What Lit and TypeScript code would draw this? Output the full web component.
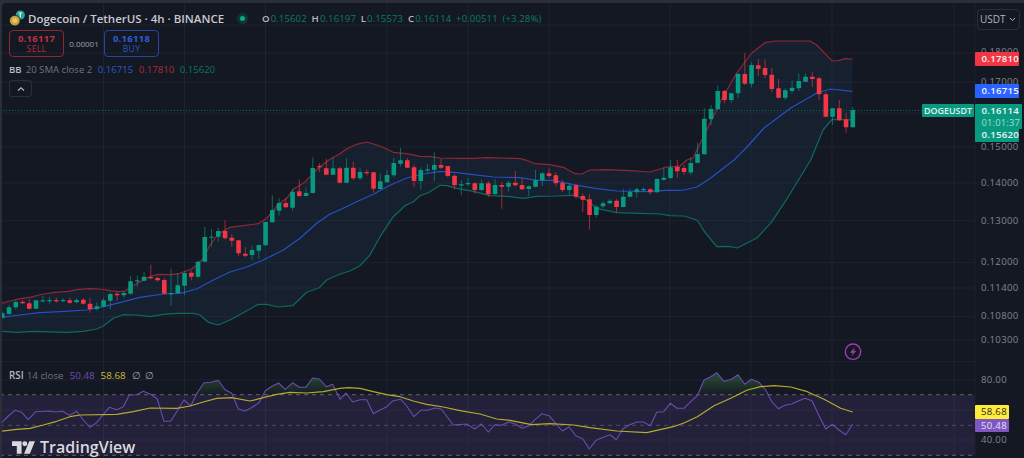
import { LitElement, html, css, svg } from "lit";
import { customElement } from "lit/decorators.js";

type P = number[];
const z4 = (a: P[]) => a.map(([x, y]) => [x / 3, 110 + y / 3]);
const z5 = (a: P[]) => a.map(([x, y]) => [340 + x / 3, 110 + y / 3]);
const z7 = (a: P[]) => a.map(([x, y]) => [x / 3, 350 + y / 3]);
const z8 = (a: P[]) => a.map(([x, y]) => [340 + x / 3, 350 + y / 3]);
const z9 = (a: P[]) => a.map(([x, y]) => [684 + x / 3, 340 + y / 3]);
const pts = (a: P[]) => a.map(([x, y]) => `${x.toFixed(1)},${y.toFixed(1)}`).join(" ");

const upper = [
  ...z4([[0,581],[30,573],[60,566],[90,562],[130,552],[165,547],[205,544],[235,538],[270,536],[300,537],[330,542],[355,545],[375,543],[400,527],[430,510],[455,498],[475,493],[510,494],[535,491],[575,477],[590,465],[610,445],[630,405],[655,372],[690,352],[730,347],[775,341],[800,325],[835,283],[860,265],[880,238],[915,216],[940,190],[960,170],[990,148],[1020,131]]),
  ...z5([[20,116],[50,103],[80,96],[120,108],[160,127],[200,131],[240,139],[270,140],[300,144],[350,145],[400,145],[440,143],[490,144],[540,146],[560,151],[585,161],[630,164],[670,172],[705,191],[725,192],[750,180],[800,179],[870,182],[930,186],[980,171],[1020,168]]),
  [686.7,160],[693,158],[706.7,130],[723,96.7],[736.7,73],[751.7,53],[765,42.7],[775,41],[810,41],[816.7,45],[831.7,60.7],[836.7,61],[845,58.7],[852.7,59],
];
const mid = [
  ...z4([[0,622],[60,615],[120,608],[180,605],[260,600],[310,590],[350,580],[420,562],[490,552],[540,550],[590,537],[640,510],[690,486],[740,471],[790,450],[850,420],[900,385],[950,340],[990,312],[1020,299]]),
  ...z5([[50,275],[100,253],[150,226],[200,204],[250,192],[300,184],[350,188],[400,194],[460,201],[540,203],[590,211],[640,211],[700,224],[770,236],[830,243],[920,245],[980,241],[1020,241]]),
  [684,190],[697,187],[710.7,178],[734,160],[747,147],[764,128],[790.7,108],[817,93],[830.7,89],[852.3,91.3],
];
const lower = [
  ...z4([[0,664],[50,667],[100,664],[200,667],[250,664],[290,657],[310,648],[340,625],[370,614],[410,615],[450,620],[490,613],[530,610],[580,610],[600,615],[625,637],[655,645],[690,630],[730,608],[775,583],[800,583],[835,591],[878,587],[920,547],[958,533],[980,510],[1020,492]]),
  ...z5([[30,483],[60,467],[90,435],[120,380],[160,320],[195,287],[220,275],[240,257],[265,248],[300,226],[320,227],[350,235],[400,244],[450,257],[500,259],[550,265],[590,259],[650,258],[700,256],[735,267],[770,295],[830,308],[900,310],[960,312],[990,317],[1020,318]]),
  [684,216],[697.3,220.3],[704,231],[716.7,246.7],[729,246.3],[737.3,248],[757.3,237.7],[771.3,222.3],[787.3,198.3],[810.7,160],[823,130],[832,119.5],[852,120],
];

// [green?, wick top, body top, body bottom, wick bottom], zoomed coordinates of the first two crops
const c1: P[] = [
[1,605,610,623,625],[1,585,592,612,614],[1,570,576,592,598],[0,570,575,580,582],[0,567,580,596,598],[1,570,571,596,597],[1,558,571,574,576],[1,561,570,573,581],[0,562,570,574,578],[1,564,570,574,576],
[0,562,571,578,582],[1,564,570,577,579],[0,563,569,581,584],[0,563,581,597,608],[1,577,589,597,602],[1,564,571,590,592],[1,548,552,572,598],[0,545,551,556,572],[1,541,549,556,563],[1,498,514,551,554],
[1,497,511,513,530],[1,486,500,512,514],[0,464,501,505,508],[0,500,504,511,515],[0,504,510,551,554],[1,476,549,551,587],[1,490,526,549,552],[1,483,489,527,556],[0,482,488,500,511],[1,452,455,500,505],
[1,351,381,455,456],[1,357,380,382,410],[1,354,363,380,395],[0,331,363,385,388],[0,372,383,392,410],[0,391,391,430,438],[0,411,431,437,441],[1,407,420,435,450],[1,404,405,422,447],[1,336,336,406,407],
[1,256,300,337,338],[1,265,279,302,317],[0,265,279,292,293],[1,237,245,293,302],[0,209,244,258,261],[1,232,249,258,260],[1,142,174,249,250],[0,160,168,170,186],[0,146,175,194,195],[1,142,175,194,195],
[0,170,175,218,220],[1,145,173,218,219],[0,155,173,205,210],[1,172,186,205,210],[0,178,186,188,196],[0,187,187,236,248],[1,190,214,237,238],[1,180,195,217,218],[1,143,159,196,202],[1,113,151,161,170],
[0,144,151,173,175],[0,163,172,213,232],[1,172,180,213,238],[1,162,178,180,188],[1,127,165,179,213],[0,147,165,173,177],[0,168,168,198,202],[0,192,197,226,238],[1,210,223,226,256],[1,203,219,223,228],
[0,218,220,240,252],[1,208,220,240,243],[0,213,220,253,262],[1,207,225,252,255],[0,217,225,230,296],[1,212,218,230,245],[0,183,218,226,230],[0,205,225,238,240],[1,226,229,237,258],[1,180,210,230,232],
[1,186,190,211,228],[0,175,190,198,204],[0,187,196,220,230],[0,210,219,240,246],[1,220,227,240,255],[0,222,226,260,266],[0,250,258,269,307],[0,252,268,315,359],[1,285,290,315,323],[1,272,280,289,294],
[1,267,272,280,282],[0,267,272,291,308],[1,237,260,291,292],[1,236,246,260,262],[1,232,238,247,262],[1,232,237,239,244],[0,234,238,247,254],[1,205,207,247,248],[1,172,203,209,212],[1,150,172,204,208],
[0,150,170,184,204],
];
// real pixel coordinates for the rest
const c2: P[] = [
[0,165,168,172,175],[1,157,163,172.5,175],[1,142.7,154,162.7,163],[1,108,118.7,154.3,154.5],[1,105,109,119.3,125],[1,85,91,109.3,109.5],[0,90,91,100,103.3],[1,93,93.3,100,103],[1,73,74,93.3,98],[0,53,74,83.7,85],
[1,62,65,83.7,87.3],[0,59,65.3,68.7,75.7],[0,59.3,68,75,78],[0,68,74.7,89,92.3],[0,79,88.3,97.7,98.3],[1,88.3,90.3,97.7,100],[1,80.7,87.7,91,93.3],[1,73.3,81,88.3,91],[1,73.3,76.7,81.7,82.3],[0,72.3,76.7,79,86.7],
[0,76.7,78.3,94.3,100],[0,91.7,94.3,116.7,117.3],[1,108,108.3,116.7,125],[0,100,108.3,120.3,121],[0,112.7,119.3,127.3,132.7],[1,106.7,110,127.3,127.7],
];
const candles = [...c1.map(([g, ...r]) => [g, ...r.map((v) => 110 + v / 3)]), ...c2];

const rsi = [
  ...z7([[5,218],[25,198],[45,181],[65,187],[85,209],[107,185],[148,183],[165,186],[188,184],[208,196],[230,184],[250,210],[270,232],[290,218],[310,193],[328,172],[350,179],[370,170],[388,135],[410,134],[430,124],[452,133],[472,147],[492,214],[512,214],[530,185],[552,150],[572,168],[592,128],[612,98],[633,97],[655,91],[675,119],[695,130],[715,177],[735,183],[757,172],[777,158],[796,122],[817,108],[836,99],[856,118],[878,98],[898,112],[917,112],[938,84],[958,87],[979,110],[998,103]]),
  ...z8([[0,148],[18,129],[38,156],[60,149],[80,149],[100,191],[120,180],[140,170],[160,152],[182,148],[200,168],[222,200],[242,181],[263,181],[284,174],[304,177],[340,225],[380,222],[404,237],[424,222],[445,246],[465,224],[485,226],[506,216],[526,222],[546,235],[567,227],[586,208],[606,191],[627,197],[647,220],[667,243],[687,231],[708,258],[728,266],[748,297],[768,271],[790,262],[810,254],[829,269],[849,236],[869,224],[890,216],[910,216],[931,227],[950,187],[971,185],[991,160],[1011,175]]),
  ...z9([[0,205],[20,185],[40,167],[60,120],[80,110],[98,98],[120,124],[142,118],[162,104],[182,133],[202,118],[225,127],[245,150],[263,185],[283,206],[303,196],[323,192],[343,183],[363,175],[384,182],[404,225],[425,267],[445,253],[465,270],[485,284],[506,253]]),
];
const rsiMa = [
  ...z7([[0,244],[50,238],[90,235],[130,225],[170,214],[210,200],[240,195],[350,193],[400,185],[450,174],[530,175],[570,168],[610,156],[650,145],[695,143],[750,153],[790,143],[830,133],[870,127],[920,129],[970,125],[1020,115]]),
  ...z8([[25,113],[60,115],[100,125],[140,134],[180,140],[220,153],[260,163],[310,171],[360,182],[420,192],[470,207],[510,211],[575,224],[630,221],[700,225],[750,233],[830,243],[920,248],[1000,230]]),
  ...z9([[0,249],[40,230],[90,197],[140,175],[190,150],[230,140],[270,137],[320,141],[370,155],[420,178],[470,205],[506,216]]),
];

const vGrid = [103.5, 184.5, 265.5, 387, 468, 549, 670, 751, 832, 954];
const hGrid = [25, 53, 82, 113, 147, 183, 220.7, 262.7, 288, 316.7, 340, 361.7, 380, 410, 440];
const axisLabels: [string, number][] = [
  ["0.18000", 52], ["0.17000", 82], ["0.15000", 147], ["0.14000", 183], ["0.13000", 221], ["0.12000", 262],
  ["0.11400", 288], ["0.10800", 316], ["0.10300", 340], ["80.00", 380], ["40.00", 440],
];

@customElement("app-root")
export class AppRoot extends LitElement {
  static styles = css`
    :host { display: block; width: 1024px; height: 458px; background: #2a2e39; overflow: hidden; font-family: "Open Sans", "Liberation Sans", sans-serif; }
    .frame { position: relative; margin: 3px 0 0 2px; width: 1022px; height: 455px; background: #141823; border-top-left-radius: 4px; overflow: hidden; display: grid; grid-template-columns: 972px 50px; }
    .canvas { position: absolute; inset: 0; width: 1022px; height: 455px; }
    .overlay { position: relative; display: flex; flex-direction: column; align-items: flex-start; padding: 6px 0 0 7px; }
    .title { display: flex; align-items: center; height: 18px; color: #c8cad0; }
    .coin { width: 16px; height: 17px; margin-right: 3px; flex: none; }
    .name { font-size: 11.5px; font-weight: 600; width: 196px; white-space: nowrap; }
    .dot { width: 11px; height: 11px; border-radius: 50%; background: #12342f; display: flex; align-items: center; justify-content: center; margin: 0 14px 0 13px; flex: none; }
    .dot i { width: 5px; height: 5px; border-radius: 50%; background: #0aa98a; }
    .ohlc { display: flex; font-size: 9.6px; color: #0c7a68; white-space: nowrap; gap: 4.8px; letter-spacing: 0.01em; }
    .ohlc b { font-weight: 600; color: #b8bac2; margin-right: 1px; }
    .trade { display: flex; align-items: center; margin-top: 3px; }
    .btn { width: 55px; height: 27px; box-sizing: border-box; border: 1px solid; border-radius: 4px; display: flex; flex-direction: column; align-items: center; justify-content: center; font-size: 8.6px; line-height: 11px; letter-spacing: 0.04em; }
    .btn b { font-size: 9.4px; font-weight: 700; }
    .sell { border-color: #8f2732; color: #b52b38; }
    .sell b { color: #c23240; }
    .buy { border-color: #23479f; color: #2a53c0; }
    .buy b { color: #2e5ed8; }
    .spread { width: 40px; text-align: center; font-size: 8px; color: #a0a3ac; font-weight: 500; }
    .bb { display: flex; gap: 5.5px; font-size: 9.6px; color: #6f737e; margin-top: 5px; height: 14px; align-items: center; white-space: nowrap; }
    .bb b { font-weight: 600; color: #b8bac2; margin-right: -1.5px; }
    .blue { color: #2c58cc; } .red { color: #ad2c39; } .green { color: #0c7462; }
    .collapse { width: 23px; height: 17px; box-sizing: border-box; margin-top: 4px; border: 1px solid #2a2e39; border-radius: 3px; display: flex; align-items: center; justify-content: center; }
    .rsi { position: absolute; left: 7px; top: 365px; display: flex; gap: 6px; font-size: 9.8px; color: #6f737e; height: 14px; align-items: center; white-space: nowrap; }
    .rsi b { font-weight: 600; color: #b8bac2; margin-right: -3px; }
    .purple { color: #6d4db0; } .yellow { color: #c9bd35; } .grey { color: #a0a3ac; margin-right: -1.5px; }
    .logo { position: absolute; left: 10px; top: 436px; display: flex; align-items: center; gap: 5px; color: #d8d9dd; height: 17px; }
    .logo span { font-size: 16px; font-weight: 600; line-height: 17px; }
    .axis { position: relative; }
    .usdt { position: absolute; left: 3px; top: 5.5px; width: 43px; height: 21px; box-sizing: border-box; border: 1px solid #2a2e39; border-radius: 4px; color: #b2b5be; font-size: 10px; display: flex; align-items: center; justify-content: space-between; padding: 0 3px 0 2px; }
    .tick { position: absolute; left: 7px; font-size: 9.6px; line-height: 12px; letter-spacing: 0.03em; color: #83868f; transform: translateY(-6px); white-space: nowrap; }
    .tag { position: absolute; left: 1px; width: 44px; box-sizing: border-box; padding-left: 6.5px; color: #f2f3f5; font-size: 9.6px; font-weight: 600; letter-spacing: 0.03em; line-height: 14px; height: 14px; border-radius: 1px; white-space: nowrap; }
    .t-red { top: 49px; background: #f23645; }
    .t-blue { top: 81px; background: #2962ff; }
    .t-green { top: 101px; width: 47px; height: 25px; background: #089981; line-height: 13px; }
    .t-green small { display: block; font-size: 9.4px; font-weight: 400; color: #a6d9cf; letter-spacing: 0.02em; line-height: 12px; }
    .t-low { top: 125px; height: 14px; background: #089981; }
    .t-yellow { top: 402px; width: 34px; height: 14px; padding-left: 6px; background: #ffeb3b; color: #2a2a1a; font-weight: 500; }
    .t-purple { top: 416px; width: 34px; height: 13px; padding-left: 6px; background: #7e57c2; color: #e6e0f2; font-weight: 500; line-height: 13px; }
    .symbol { position: absolute; right: 0; top: 101px; width: 52px; height: 13px; background: #089981; color: #e6f2ef; font-size: 8.9px; font-weight: 600; line-height: 13px; text-align: center; border-radius: 1px; }
  `;

  private chart() {
    const band = `${pts(upper)} ${pts([...lower].reverse())}`;
    const cw = 4.6;
    return svg`
      <svg class="canvas" viewBox="2 3 1022 455">
        <defs>
          <linearGradient id="ob" x1="0" y1="375" x2="0" y2="395" gradientUnits="userSpaceOnUse">
            <stop offset="0" stop-color="#4caf50" stop-opacity="0.32"></stop>
            <stop offset="1" stop-color="#4caf50" stop-opacity="0.03"></stop>
          </linearGradient>
          <clipPath id="above"><rect x="0" y="360" width="976" height="34.7"></rect></clipPath>
        </defs>
        ${hGrid.map((y) => svg`<line x1="0" x2="975" y1=${y} y2=${y} stroke="#1f2330"></line>`)}
        ${vGrid.map((x) => svg`<line x1=${x} x2=${x} y1="0" y2="458" stroke="#1f2330"></line>`)}
        <rect x="0" y="394.7" width="975" height="60.6" fill="#7e57c2" fill-opacity="0.14"></rect>
        <line x1="0" x2="975" y1="394.7" y2="394.7" stroke="#62656f" stroke-dasharray="4 4"></line>
        <line x1="0" x2="975" y1="425.3" y2="425.3" stroke="#4e505c" stroke-dasharray="4 4"></line>
        <line x1="0" x2="975" y1="455.3" y2="455.3" stroke="#62656f" stroke-dasharray="4 4"></line>
        <line x1="975" x2="975" y1="3" y2="458" stroke="#1c2029"></line>

        <polygon points=${band} fill="#3f8fc0" fill-opacity="0.07"></polygon>
        <polyline points=${pts(upper)} fill="none" stroke="#8f2735" stroke-width="1.2" stroke-linejoin="round"></polyline>
        <polyline points=${pts(mid)} fill="none" stroke="#2450c4" stroke-width="1.2" stroke-linejoin="round"></polyline>
        <polyline points=${pts(lower)} fill="none" stroke="#0d6a5c" stroke-width="1.2" stroke-linejoin="round"></polyline>
        <line x1="0" x2="975" y1="110.5" y2="110.5" stroke="#089981" stroke-opacity="0.6" stroke-dasharray="1 2"></line>

        ${candles.map(([g, wt, bt, bb, wb], i) => {
          const x = 2.3 + i * 6.75;
          const col = g ? "#089981" : "#f23645";
          return svg`
            <line x1=${x} x2=${x} y1=${wt} y2=${wb} stroke=${col} stroke-opacity="0.7" stroke-width="0.9"></line>
            <rect x=${x - cw / 2} y=${bt} width=${cw} height=${Math.max(bb - bt, 1.2)} rx="0.5" fill=${col}></rect>`;
        })}

        <polygon points=${`${pts(rsi)} 852.7,395 1.7,395`} fill="url(#ob)" clip-path="url(#above)"></polygon>
        <polyline points=${pts(rsi)} fill="none" stroke="#6a4cae" stroke-width="1.1" stroke-linejoin="round"></polyline>
        <polyline points=${pts(rsiMa)} fill="none" stroke="#b5ab2e" stroke-width="1.2" stroke-linejoin="round"></polyline>

        <circle cx="853" cy="351.7" r="7.7" fill="none" stroke="#9a3fb0" stroke-width="1.4"></circle>
        <path d="M855 347 L849.8 352.8 H852.8 L851.2 356.6 L856.4 350.8 H853.4 Z" fill="#9a3fb0"></path>
      </svg>`;
  }

  render() {
    return html`
      <div class="frame">
        ${this.chart()}
        <div class="overlay">
          <div class="title">
            <svg class="coin" viewBox="0 0 16 17">
              <circle cx="11.3" cy="5" r="4.6" fill="#26a69a"></circle>
              <path d="M9.6 3 H13 M11.3 3 V7.6" stroke="#e8f5f2" stroke-width="1.2" fill="none"></path>
              <circle cx="5.8" cy="10.6" r="5.3" fill="#c9a23a" stroke="#141823" stroke-width="0.8"></circle>
              <circle cx="5.8" cy="10.6" r="2.5" fill="#dfc56a"></circle>
            </svg>
            <span class="name">Dogecoin / TetherUS · 4h · BINANCE</span>
            <span class="dot"><i></i></span>
            <span class="ohlc">
              <span><b>O</b>0.15602</span><span><b>H</b>0.16197</span><span><b>L</b>0.15573</span><span><b>C</b>0.16114</span><span>+0.00511</span><span>(+3.28%)</span>
            </span>
          </div>
          <div class="trade">
            <div class="btn sell"><b>0.16117</b><span>SELL</span></div>
            <div class="spread">0.00001</div>
            <div class="btn buy"><b>0.16118</b><span>BUY</span></div>
          </div>
          <div class="bb">
            <b>BB</b><span>20 SMA close 2</span><span class="blue">0.16715</span><span class="red">0.17810</span><span class="green">0.15620</span>
          </div>
          <div class="collapse">
            <svg width="10" height="6" viewBox="0 0 10 6"><path d="M2 4.5 L5 1.8 L8 4.5" fill="none" stroke="#b2b5be" stroke-width="1.3"></path></svg>
          </div>
          <div class="rsi">
            <b>RSI</b><span>14 close</span><span class="purple">50.48</span><span class="yellow">58.68</span><span class="grey">∅</span><span class="grey">∅</span>
          </div>
          <div class="logo">
            <svg width="23" height="13" viewBox="0 0 24 13">
              <path d="M0 0 H10 V13 H5 V5 H0 Z" fill="#d8d9dd"></path>
              <circle cx="13.4" cy="2.6" r="2.6" fill="#d8d9dd"></circle>
              <path d="M18 0 H24 L18.6 13 H12.6 Z" fill="#d8d9dd"></path>
            </svg>
            <span>TradingView</span>
          </div>
          <div class="symbol">DOGEUSDT</div>
        </div>
        <div class="axis">
          <div class="usdt"><span>USDT</span>
            <svg width="7" height="5" viewBox="0 0 7 5"><path d="M1 1 L3.5 3.5 L6 1" fill="none" stroke="#b2b5be" stroke-width="1"></path></svg>
          </div>
          ${axisLabels.map(([t, y]) => html`<div class="tick" style="top:${y - 3}px">${t}</div>`)}
          <div class="tag t-red">0.17810</div>
          <div class="tag t-blue">0.16715</div>
          <div class="tag t-green">0.16114<small>01:01:37</small></div>
          <div class="tag t-low">0.15620</div>
          <div class="tag t-yellow">58.68</div>
          <div class="tag t-purple">50.48</div>
        </div>
      </div>
    `;
  }
}
